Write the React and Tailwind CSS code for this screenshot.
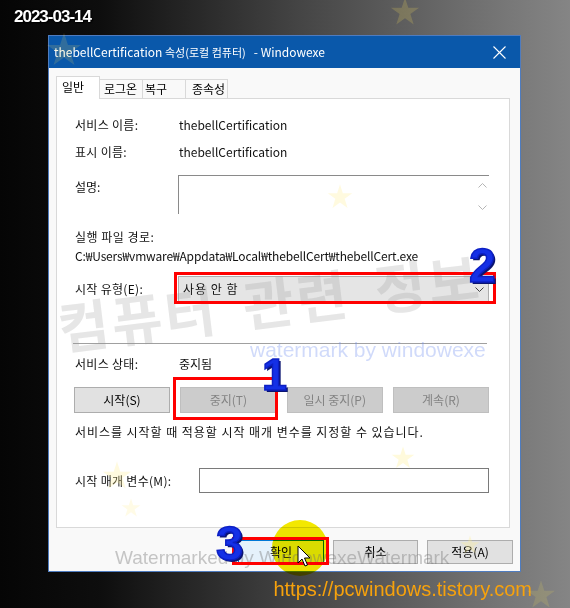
import React from "react";

const STAR = "50,2 61,36 97,36 68,57 79,92 50,71 21,92 32,57 3,36 39,36";

const stars = [
  { x: 405, y: 12, s: 30, fill: "rgba(230,210,90,0.22)" },
  { x: 64, y: 50, s: 36, fill: "rgba(255,225,90,0.16)" },
  { x: 340, y: 197, s: 26, fill: "rgba(255,238,140,0.28)" },
  { x: 117, y: 476, s: 30, fill: "rgba(255,238,140,0.28)" },
  { x: 131, y: 508, s: 20, fill: "rgba(255,238,140,0.22)" },
  { x: 403, y: 458, s: 24, fill: "rgba(255,238,140,0.3)" },
  { x: 470, y: 545, s: 20, fill: "rgba(255,238,140,0.3)" },
  { x: 541, y: 595, s: 30, fill: "rgba(230,210,90,0.18)" },
];

function Star({ x, y, s, fill }) {
  return (
    <svg
      className="absolute pointer-events-none"
      style={{ left: x - s / 2, top: y - s / 2 }}
      width={s}
      height={s}
      viewBox="0 0 100 100"
    >
      <polygon points={STAR} fill={fill} />
    </svg>
  );
}

function Btn({ children, disabled, className = "" }) {
  return (
    <div
      className={
        "h-full flex items-center justify-center border text-[12px] " +
        (disabled
          ? "bg-[#cccccc] border-[#bfbfbf] text-[#838383] "
          : "bg-[#e1e1e1] border-[#adadad] text-black ") +
        className
      }
    >
      {children}
    </div>
  );
}

function Dialog() {
  return (
    <div className="ml-[48px] w-[473px] h-[537px] border border-[#4f7cbf] bg-[#f9f9f9] flex flex-col">
      {/* title bar */}
      <div className="h-[32px] bg-[#0a58aa] flex items-center justify-between pl-[5px] pr-[14px] text-white text-[12px]">
        <span className="whitespace-pre">
          thebellCertification <span className="text-[11px]">속성(로컬 컴퓨터)</span>   - Windowexe
        </span>
        <svg width="13" height="13" viewBox="0 0 13 13">
          <path d="M0.5 0.5 L12.5 12.5 M12.5 0.5 L0.5 12.5" stroke="#fff" strokeWidth="1.1" />
        </svg>
      </div>

      <div className="flex-1 flex flex-col px-[7px] pt-[8px]">
        {/* tabs */}
        <div className="flex items-end h-[23px] -mb-px relative z-10 text-[12px]">
          <div className="w-[44px] h-[23px] bg-white border border-b-0 border-[#d9d9d9] pl-[5px] leading-[20px]">일반</div>
          <div className="w-[44px] h-[20px] -ml-px border border-b-0 border-[#d9d9d9] pl-[4px] leading-[18px]">로그온</div>
          <div className="w-[44px] h-[20px] -ml-px border border-b-0 border-[#d9d9d9] pl-[2px] leading-[18px]">복구</div>
          <div className="w-[43px] h-[20px] -ml-px border border-b-0 border-[#d9d9d9] pl-[6px] leading-[18px]">종속성</div>
        </div>

        {/* panel */}
        <div className="w-[454px] h-[430px] bg-white border border-[#d9d9d9] pl-[18px] pt-[18px] text-[12px] leading-[16px] text-[#111]">
          <div className="flex">
            <span className="w-[104px] tracking-[0.3px]">서비스 이름:</span>
            <span>thebellCertification</span>
          </div>
          <div className="flex mt-[11px]">
            <span className="w-[104px] tracking-[0.3px]">표시 이름:</span>
            <span>thebellCertification</span>
          </div>
          <div className="flex mt-[15px] h-[39px]">
            <span className="w-[103px] pt-[4px]">설명:</span>
            <div className="relative w-[311px] h-[39px] border-t border-l border-[#8a8a8a]">
              <svg className="absolute left-[299px] top-[7px]" width="9" height="5" viewBox="0 0 9 5">
                <path d="M0.5 4.5 L4.5 0.5 L8.5 4.5" fill="none" stroke="#b5b5b5" />
              </svg>
              <svg className="absolute left-[299px] top-[29px]" width="9" height="5" viewBox="0 0 9 5">
                <path d="M0.5 0.5 L4.5 4.5 L8.5 0.5" fill="none" stroke="#b5b5b5" />
              </svg>
            </div>
          </div>
          <div className="mt-[15px] tracking-[0.5px]">실행 파일 경로:</div>
          <div className="mt-[3px] tracking-[-0.15px]">C:₩Users₩vmware₩Appdata₩Local₩thebellCert₩thebellCert.exe</div>
          <div className="flex items-center mt-[12px] h-[26px]">
            <span className="w-[103px] tracking-[0.3px]">시작 유형(E):</span>
            <div className="w-[311px] h-[26px] bg-[#e5e5e5] border border-[#adadad] flex items-center justify-between pl-[4px] pr-[4px]">
              <span className="tracking-[1px]">사용 안 함</span>
              <svg width="9" height="5" viewBox="0 0 9 5">
                <path d="M0.5 0.5 L4.5 4.5 L8.5 0.5" fill="none" stroke="#444" />
              </svg>
            </div>
          </div>
          <div className="mt-[41px] -ml-[2px] w-[414px] h-px bg-[#a0a0a0]" />
          <div className="flex mt-[12px]">
            <span className="w-[104px] tracking-[0.3px]">서비스 상태:</span>
            <span>중지됨</span>
          </div>
          <div className="flex justify-between w-[415px] -ml-px mt-[15px] h-[26px]">
            <Btn className="w-[96px]">시작(S)</Btn>
            <Btn disabled className="w-[96px]">중지(T)</Btn>
            <Btn disabled className="w-[96px]">일시 중지(P)</Btn>
            <Btn disabled className="w-[96px]">계속(R)</Btn>
          </div>
          <div className="mt-[11px] tracking-[0.95px]">서비스를 시작할 때 적용할 시작 매개 변수를 지정할 수 있습니다.</div>
          <div className="flex items-center mt-[28px] h-[25px]">
            <span className="w-[124px] tracking-[0.3px]">시작 매개 변수(M):</span>
            <div className="w-[290px] h-[25px] border border-[#7a7a7a] bg-white" />
          </div>
        </div>

        {/* bottom buttons */}
        <div className="flex justify-end gap-[9px] mt-[12px] h-[24px] text-[12px]">
          <div className="w-[86px] h-full flex items-center justify-center bg-[#e5f1fb] border border-[#0078d7]">확인</div>
          <Btn className="w-[85px]">취소</Btn>
          <Btn className="w-[86px]">적용(A)</Btn>
        </div>
      </div>
    </div>
  );
}

export default function App() {
  return (
    <div className="relative w-[570px] h-[608px] overflow-hidden bg-[linear-gradient(90deg,#050505_0%,#0e0e0e_18%,#444_52%,#767676_88%,#858585_100%)] font-['Noto_Sans_CJK_KR','Noto_Sans',sans-serif]">
      <div className="h-[35px] pl-[14px] pt-[7px] text-white text-[17px] leading-[20px] font-bold tracking-[-1px] font-['Liberation_Sans',sans-serif] [text-shadow:0_0_2px_#000,1px_1px_1px_#000]">
        2023-03-14
      </div>

      <Dialog />

      <div className="flex justify-end pr-[38px] pt-[5px] text-[20px] leading-[24px] text-[#f7a20c] font-['Liberation_Sans',sans-serif]">
        https://pcwindows.tistory.com
      </div>

      {/* watermarks */}
      <div className="absolute left-[58px] top-[296px] origin-left -rotate-[7deg] whitespace-pre text-[55px] leading-[60px] font-bold tracking-[3px] [word-spacing:10px] text-[rgba(150,150,150,0.24)] pointer-events-none">
        컴퓨터 관련 정보
      </div>
      <div className="absolute left-[250px] top-[338px] text-[21px] leading-[24px] text-[rgba(110,140,240,0.32)] font-['Liberation_Sans',sans-serif] pointer-events-none">
        watermark by windowexe
      </div>

      {stars.map((s, i) => (
        <Star key={i} {...s} />
      ))}

      {/* highlight circle */}
      <div className="absolute left-[272px] top-[520px] w-[56px] h-[56px] rounded-full bg-[#f3e800] mix-blend-multiply pointer-events-none" />

      <div className="absolute left-[115px] top-[546px] text-[19px] leading-[24px] text-[rgba(110,110,110,0.38)] font-['Liberation_Sans',sans-serif] pointer-events-none">
        Watermarked by WindowexeWatermark
      </div>

      {/* red marker boxes */}
      <div className="absolute left-[174px] top-[272px] w-[322px] h-[32px] border-[3px] border-[#ff0000]" />
      <div className="absolute left-[173px] top-[377px] w-[105px] h-[43px] border-[3px] border-[#ff0000]" />
      <div className="absolute left-[232px] top-[537px] w-[97px] h-[28px] border-[3px] border-[#ff0000]" />

      {/* step numbers */}
      <div className="absolute left-[469px] top-[242px] text-[48px] leading-none font-bold text-[#1430e6] [-webkit-text-stroke:1.5px_#0c1fc4] [text-shadow:2px_2px_0_#0a1470] font-['Liberation_Sans',sans-serif]">
        2
      </div>
      <div className="absolute left-[262px] top-[352px] text-[45px] leading-none font-bold text-[#1430e6] [-webkit-text-stroke:1.5px_#0c1fc4] [text-shadow:2px_2px_0_#0a1470] font-['Liberation_Sans',sans-serif]">
        1
      </div>
      <div className="absolute left-[216px] top-[519px] text-[49px] leading-none font-bold text-[#1430e6] [-webkit-text-stroke:1.5px_#0c1fc4] [text-shadow:2px_2px_0_#0a1470] font-['Liberation_Sans',sans-serif]">
        3
      </div>

      {/* mouse cursor */}
      <svg className="absolute left-[297px] top-[545px]" width="16" height="24" viewBox="0 0 16 24">
        <path d="M1 1 L1 18 L5 14 L8 21 L10.5 20 L7.5 13 L13 13 Z" fill="#fff" stroke="#000" strokeWidth="1" strokeLinejoin="round" />
      </svg>
    </div>
  );
}
